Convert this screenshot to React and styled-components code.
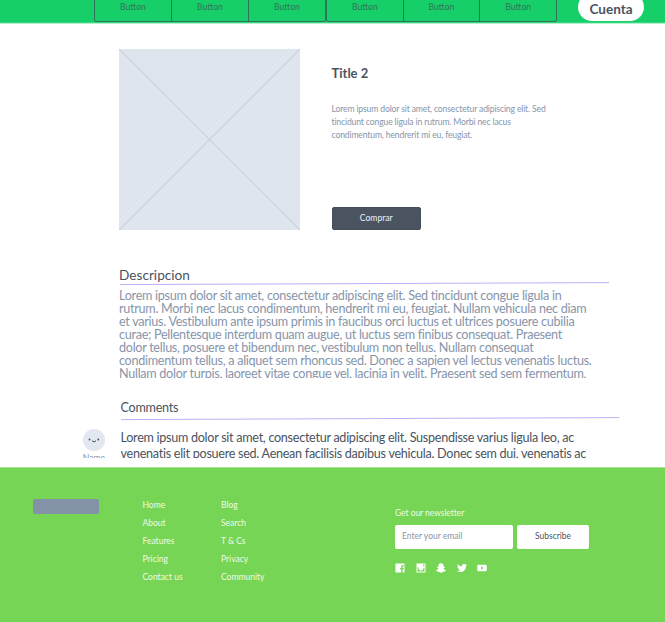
import React from "react";
import styled, { createGlobalStyle } from "styled-components";
import { FaSnapchatGhost, FaTwitter } from "react-icons/fa";

const GlobalStyle = createGlobalStyle`
  *, *::before, *::after { box-sizing: border-box; font-variant-ligatures: none; }
  body { margin: 0; background: #fff; font-family: Lato, "Liberation Sans", sans-serif; color: #4a5460; }
  p, h1, h2, ul { margin: 0; padding: 0; font-weight: 400; }
`;

const Page = styled.div`
  width: 665px;
  height: 622px;
  overflow: hidden;
  display: flex;
  flex-direction: column;
`;

const Header = styled.header`
  flex: none;
  height: 24px;
  padding: 0 21px 1px 94px;
  display: flex;
  align-items: flex-end;
  background: #16cf68;
  border-bottom: 1px solid #b5f0cd;
  box-shadow: inset 0 -1px #3ad681;
  overflow: hidden;
`;

const ButtonGroup = styled.div`
  display: flex;
  width: ${(p) => p.$width}px;
  height: 31px;
  border: 1px solid #30735a;
  border-bottom-width: 1.5px;
  border-radius: 2px;
`;

const GroupButton = styled.button`
  flex: 1;
  padding: 0;
  border: 0;
  border-left: ${(p) => (p.$first ? "0" : "1px solid #30735a")};
  background: transparent;
  color: #35735b;
  font: 400 8.6px/28px Lato, sans-serif;
`;

const Account = styled.button`
  margin-left: auto;
  margin-bottom: 1px;
  width: 66px;
  height: 28px;
  padding: 4px 0 0;
  border: 0;
  border-radius: 14px;
  background: #fff;
  color: #4a5460;
  font: 700 13.5px/24px Lato, sans-serif;
`;

const Product = styled.section`
  flex: none;
  height: 206px;
  padding: 25px 0 0 119px;
  display: flex;
  gap: 31.5px;
`;

const Placeholder = styled.svg`
  flex: none;
  width: 181px;
  height: 181px;
  background: #dfe5ed;
`;

const ProductInfo = styled.div`
  width: 230px;
  display: flex;
  flex-direction: column;
  align-items: flex-start;
`;

const Title = styled.h1`
  margin-top: 15px;
  font-size: 13px;
  line-height: 18px;
  font-weight: 700;
`;

const Summary = styled.p`
  margin-top: 21px;
  font-size: 8.6px;
  letter-spacing: -0.135px;
  line-height: 13px;
  color: #8795aa;
  white-space: nowrap;
`;

const BuyButton = styled.button`
  margin-top: auto;
  width: 89.5px;
  height: 23px;
  padding: 0 0 1px;
  border: 1px solid #46505b;
  border-radius: 2px;
  background: #4a5460;
  color: #eef1f4;
  font: 400 8.6px/18px Lato, sans-serif;
`;

const Description = styled.section`
  flex: none;
  height: 148px;
  padding: 36px 0 0 119px;
`;

const Heading = styled.h2`
  font-size: ${(p) => p.$size}px;
  letter-spacing: ${(p) => p.$tracking || 0}px;
  line-height: 18px;
  white-space: nowrap;
`;

const Rule = styled.svg`
  display: block;
  height: 4px;
  width: ${(p) => p.$width}px;
  margin-left: ${(p) => p.$inset}px;
  margin-top: ${(p) => p.$shift}px;
`;

const BodyText = styled.p`
  height: ${(p) => p.$height}px;
  margin-top: ${(p) => p.$gap || 0}px;
  overflow: hidden;
  white-space: nowrap;
  font-size: ${(p) => p.$size}px;
  letter-spacing: -0.28px;
  line-height: ${(p) => p.$leading}px;
  color: ${(p) => p.$color};
`;

const Comments = styled.section`
  flex: none;
  height: 89px;
  padding: 21px 0 0 82px;
  display: grid;
  grid-template-columns: 24px 1fr;
  grid-template-rows: 30px 38px;
  column-gap: 14.5px;
`;

const CommentHead = styled.div`
  grid-column: 2;
`;

const Author = styled.div`
  height: 29px;
  overflow: hidden;
  display: flex;
  flex-direction: column;
  align-items: center;
  font-size: 8.6px;
  line-height: 14px;
  color: #8795aa;
`;

const Avatar = styled.svg`
  flex: none;
  width: 22px;
  height: 22px;
`;

const Footer = styled.footer`
  flex: 1;
  background: #77d555;
  border-top: 1px solid #a9e493;
  display: flex;
  align-items: flex-start;
  padding: 31px 0 0 33px;
  color: #edfbe7;
  font-size: 8.5px;
`;

const Logo = styled.div`
  width: 66px;
  height: 14.5px;
  border-radius: 2px;
  background: #8492a8;
`;

const LinkList = styled.ul`
  list-style: none;
  width: ${(p) => p.$width}px;
  margin-left: ${(p) => p.$offset}px;
  line-height: 18px;
  margin-top: -3px;
  white-space: nowrap;
`;

const Newsletter = styled.div`
  width: 196px;
  margin-top: 7px;
`;

const Label = styled.p`
  line-height: 14px;
  letter-spacing: -0.05px;
`;

const Form = styled.div`
  display: flex;
  gap: 4px;
  margin-top: 5px;
`;

const Email = styled.input`
  width: 118px;
  height: 23.5px;
  padding: 0 7px 1px;
  border: 0;
  border-radius: 2px;
  background: #fff;
  font: 400 8.5px Lato, sans-serif;
  &::placeholder { color: #8795aa; opacity: 1; }
`;

const Subscribe = styled.button`
  width: 72px;
  height: 23.5px;
  padding: 0 0 1px;
  border: 0;
  border-radius: 2px;
  background: #fff;
  color: #4a5460;
  font: 400 8.5px Lato, sans-serif;
`;

const Social = styled.div`
  display: flex;
  align-items: center;
  gap: 10.6px;
  margin-top: 14px;
  color: #fff;
  svg { display: block; width: 10px; height: 10px; }
`;

const description = [
  "Lorem ipsum dolor sit amet, consectetur adipiscing elit. Sed tincidunt congue ligula in",
  "rutrum. Morbi nec lacus condimentum, hendrerit mi eu, feugiat. Nullam vehicula nec diam",
  "et varius. Vestibulum ante ipsum primis in faucibus orci luctus et ultrices posuere cubilia",
  "curae; Pellentesque interdum quam augue, ut luctus sem finibus consequat. Praesent",
  "dolor tellus, posuere et bibendum nec, vestibulum non tellus. Nullam consequat",
  "condimentum tellus, a aliquet sem rhoncus sed. Donec a sapien vel lectus venenatis luctus.",
  "Nullam dolor turpis, laoreet vitae congue vel, lacinia in velit. Praesent sed sem fermentum,",
];

const summary = [
  "Lorem ipsum dolor sit amet, consectetur adipiscing elit. Sed",
  "tincidunt congue ligula in rutrum. Morbi nec lacus",
  "condimentum, hendrerit mi eu, feugiat.",
];

const comment = [
  "Lorem ipsum dolor sit amet, consectetur adipiscing elit. Suspendisse varius ligula leo, ac",
  "venenatis elit posuere sed. Aenean facilisis dapibus vehicula. Donec sem dui, venenatis ac",
];

const Lines = ({ items }) =>
  items.map((line, i) => (
    <React.Fragment key={line}>
      {i > 0 && <br />}
      {line}
    </React.Fragment>
  ));

const Divider = ({ width, inset, shift }) => (
  <Rule $width={width} $inset={inset} $shift={shift} viewBox={`0 0 ${width} 4`}>
    <line x1="0" y1="2.6" x2={width} y2="0.6" stroke="#c0b0f8" strokeWidth="1" />
  </Rule>
);

export default function App() {
  return (
    <Page>
      <GlobalStyle />
      <Header>
        {[232, 231].map((width) => (
          <ButtonGroup key={width} $width={width}>
            {[0, 1, 2].map((i) => (
              <GroupButton key={i} $first={i === 0}>Button</GroupButton>
            ))}
          </ButtonGroup>
        ))}
        <Account>Cuenta</Account>
      </Header>

      <Product>
        <Placeholder viewBox="0 0 181 181">
          <path d="M0 0L181 181M181 0L0 181" stroke="#c8d1dd" strokeWidth="1.2" />
        </Placeholder>
        <ProductInfo>
          <Title>Title 2</Title>
          <Summary><Lines items={summary} /></Summary>
          <BuyButton>Comprar</BuyButton>
        </ProductInfo>
      </Product>

      <Description>
        <Heading $size={13.65}>Descripcion</Heading>
        <Divider width={489} inset={1} shift={-2} />
        <BodyText $gap={3} $height={89} $size={12.6} $leading={13} $color="#8795aa">
          <Lines items={description} />
        </BodyText>
      </Description>

      <Comments>
        <CommentHead>
          <Heading $size={12.6} $tracking={-0.25}>Comments</Heading>
          <Divider width={498.5} inset={0.5} shift={0} />
        </CommentHead>
        <Author>
          <Avatar viewBox="0 0 22 22">
            <circle cx="11" cy="11" r="11" fill="#e2e7f0" />
            <circle cx="6.5" cy="10.5" r=".9" fill="#4a5460" />
            <circle cx="15.3" cy="10.5" r=".9" fill="#4a5460" />
            <path d="M9 11.8q2 2.2 4 0" fill="none" stroke="#4a5460" strokeWidth="1" />
          </Avatar>
          Name
        </Author>
        <BodyText $gap={1} $height={28} $size={12.6} $leading={15.5} $color="#4a5460">
          <Lines items={comment} />
        </BodyText>
      </Comments>

      <Footer>
        <Logo />
        <LinkList $width={78.5} $offset={43.5}>
          {["Home", "About", "Features", "Pricing", "Contact us"].map((t) => <li key={t}>{t}</li>)}
        </LinkList>
        <LinkList $width={174} $offset={0}>
          {["Blog", "Search", "T & Cs", "Privacy", "Community"].map((t) => <li key={t}>{t}</li>)}
        </LinkList>
        <Newsletter>
          <Label>Get our newsletter</Label>
          <Form>
            <Email placeholder="Enter your email" />
            <Subscribe>Subscribe</Subscribe>
          </Form>
          <Social>
            <svg viewBox="0 0 10 10">
              <path fill="currentColor" d="M.5.5h9v9H7.7V6.2h1.2V4.9H7.7V4q0-.7.6-.7h.8V2H8Q6.2 2 6.2 3.7v1.2H5v1.3h1.2v3.3H.5z" />
            </svg>
            <svg viewBox="0 0 10 10">
              <path fill="currentColor" fillRule="evenodd" d="M.5.5h9v9h-9zM1.5 4.4v4.1h7V4.4H7.4a2.5 2.5 0 1 1-4.8 0zM7 1.5V3h1.5V1.5z" />
              <circle cx="5" cy="5.2" r="1.3" fill="currentColor" />
            </svg>
            <FaSnapchatGhost />
            <FaTwitter />
            <svg viewBox="0 0 10 10">
              <path fill="currentColor" fillRule="evenodd" d="M1.3 1.8h7.4q1 0 1 1v4.4q0 1-1 1H1.3q-1 0-1-1V2.8q0-1 1-1zM4 3.5v3L6.7 5z" />
            </svg>
          </Social>
        </Newsletter>
      </Footer>
    </Page>
  );
}
